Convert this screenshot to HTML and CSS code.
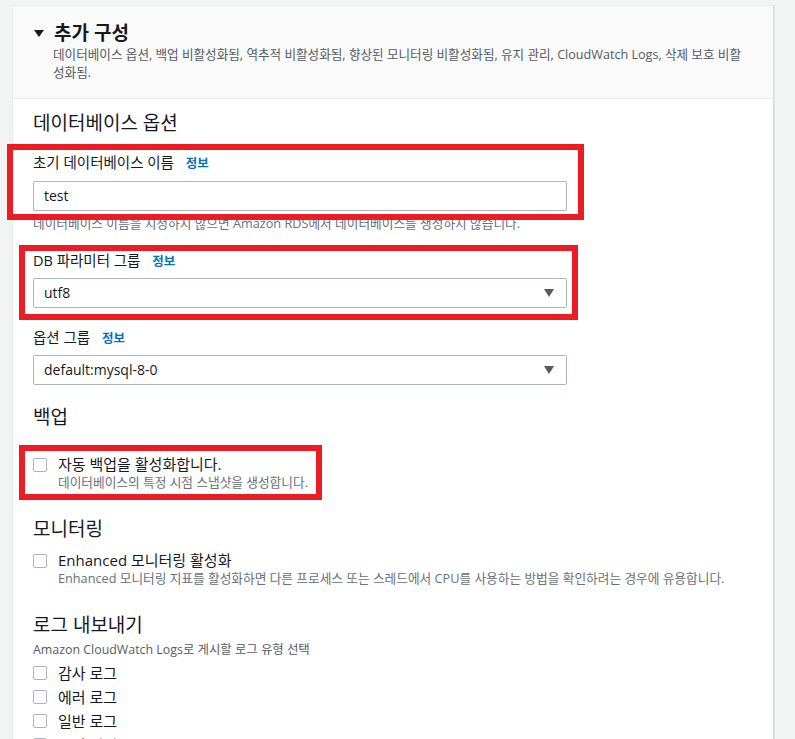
FILE: index.html
```html
<!doctype html>
<html lang="ko">
<head>
	<meta charset="UTF-8">
	<title>추가 구성</title>
	<link rel="stylesheet" href="styles.css">
</head>
<body>
	<div class="page">
		<div class="card">
			<div class="card-header">
				<div class="card-title">
					<svg class="caret" width="10" height="7" viewBox="0 0 10 7"><path d="M0 0H10L5 7Z" fill="#16191f"/></svg>
					<h2>추가 구성</h2>
				</div>
				<p class="card-desc">데이터베이스 옵션, 백업 비활성화됨, 역추적 비활성화됨, 향상된 모니터링 비활성화됨, 유지 관리, CloudWatch Logs, 삭제 보호 비활성화됨.</p>
			</div>
			<div class="card-body">
				<h3 class="section-title">데이터베이스 옵션</h3>

				<div class="field first">
					<div class="label">초기 데이터베이스 이름 <a class="info" href="javascript:void(0);">정보</a></div>
					<div class="control">test</div>
					<div class="hint">데이터베이스 이름을 지정하지 않으면 Amazon RDS에서 데이터베이스를 생성하지 않습니다.</div>
				</div>

				<div class="field">
					<div class="label">DB 파라미터 그룹 <a class="info" href="javascript:void(0);">정보</a></div>
					<div class="control select">utf8
						<svg class="arrow" width="10" height="8" viewBox="0 0 10 8"><path d="M0 0H10L5 8Z" fill="#545b64"/></svg>
					</div>
				</div>

				<div class="field">
					<div class="label">옵션 그룹 <a class="info" href="javascript:void(0);">정보</a></div>
					<div class="control select">default:mysql-8-0
						<svg class="arrow" width="10" height="8" viewBox="0 0 10 8"><path d="M0 0H10L5 8Z" fill="#545b64"/></svg>
					</div>
				</div>

				<h3 class="section-title gap-sm">백업</h3>
				<div class="check first-check">
					<span class="box"></span>
					<div>
						<div class="check-label">자동 백업을 활성화합니다.</div>
						<div class="check-desc">데이터베이스의 특정 시점 스냅샷을 생성합니다.</div>
					</div>
				</div>

				<h3 class="section-title gap-lg">모니터링</h3>
				<div class="check">
					<span class="box"></span>
					<div>
						<div class="check-label">Enhanced 모니터링 활성화</div>
						<div class="check-desc">Enhanced 모니터링 지표를 활성화하면 다른 프로세스 또는 스레드에서 CPU를 사용하는 방법을 확인하려는 경우에 유용합니다.</div>
					</div>
				</div>

				<h3 class="section-title gap-lg">로그 내보내기</h3>
				<div class="section-hint">Amazon CloudWatch Logs로 게시할 로그 유형 선택</div>
				<div class="check-list">
					<div class="check-row"><span class="box"></span><span class="check-label">감사 로그</span></div>
					<div class="check-row"><span class="box"></span><span class="check-label">에러 로그</span></div>
					<div class="check-row"><span class="box"></span><span class="check-label">일반 로그</span></div>
					<div class="check-row"><span class="box"></span><span class="check-label">느린 쿼리 로그</span></div>
				</div>
			</div>
		</div>

		<!-- 강조 표시 -->
		<div class="mark mark-1"></div>
		<div class="mark mark-2"></div>
		<div class="mark mark-3"></div>
	</div>
</body>
</html>
```

FILE: styles.css
```css
html, body {
	margin: 0;
	padding: 0;
	background-color: #f2f3f3;
	font-family: "Open Sans", "Noto Sans CJK KR", sans-serif;
	color: #16191f;
	overflow: hidden;
}
.page {
	position: relative;
	padding-top: 5px;
	height: 734px;
}
.card {
	margin-left: 12px;
	width: 762px;
	box-sizing: border-box;
	background-color: #fff;
	border: 1px solid #eaeded;
	border-right-color: #d5dbdb;
	box-shadow: 1px 0 0 #e4e7e7;
	min-height: 760px;
}
.card-header {
	background-color: #fafafa;
	border-bottom: 1px solid #eaeded;
	padding: 15px 30px 16px 20px;
}
.card-title {
	display: flex;
	align-items: center;
	height: 24px;
}
.caret {
	margin: 1px 10px 0 1px;
}
.card-title h2 {
	margin: 0;
	font-size: 19px;
	line-height: 24px;
	font-weight: 700;
}
.card-desc {
	margin: 1px 0 0 20px;
	font-size: 12.6px;
	line-height: 18px;
	color: #545b64;
}
.card-body {
	padding: 12px 20px 0;
}
.section-title {
	margin: 0;
	font-size: 19px;
	line-height: 24px;
	font-weight: 400;
}
.section-title.gap-sm {
	margin-top: 20px;
}
.section-title.gap-lg {
	margin-top: 27px;
}
.field {
	margin-top: 20px;
}
.field.first {
	margin-top: 18px;
}
.label {
	font-size: 14.5px;
	line-height: 20px;
}
a {
	text-decoration: none;
}
.info {
	margin-left: 8px;
	font-size: 12.5px;
	font-weight: 700;
	color: #0073bb;
}
.control {
	position: relative;
	margin-top: 6px;
	width: 534px;
	height: 30px;
	box-sizing: border-box;
	border: 1px solid #aab7b8;
	border-radius: 2px;
	padding: 0 10px;
	font-size: 14px;
	line-height: 28px;
	background-color: #fff;
}
.field.first .control {
	margin-top: 7px;
}
.select .arrow {
	position: absolute;
	right: 12px;
	top: 10px;
}
.hint {
	margin-top: 4px;
	font-size: 12.7px;
	line-height: 16px;
	color: #687078;
}
.check {
	display: flex;
	margin-top: 9px;
}
.check.first-check {
	margin-top: 25px;
}
.box {
	flex: none;
	width: 14px;
	height: 14px;
	box-sizing: border-box;
	border: 1px solid #aab7b8;
	border-radius: 2px;
	margin: 4px 11px 0 0;
	background-color: #fff;
}
.check-label {
	font-size: 15px;
	line-height: 20px;
}
.check-desc {
	font-size: 12.7px;
	line-height: 16px;
	color: #687078;
}
.section-hint {
	margin-top: 5px;
	font-size: 12.4px;
	line-height: 16px;
	color: #545b64;
}
.check-list {
	margin-top: 3px;
}
.check-row {
	display: flex;
	height: 24px;
	line-height: 24px;
}
.check-row .box {
	margin-top: 5px;
}
.check-row .check-label {
	line-height: 24px;
}
.mark {
	position: absolute;
	border: 6px solid #ec1c24;
	box-sizing: border-box;
}
.mark-1 {
	left: 7px;
	top: 144px;
	width: 577px;
	height: 76px;
}
.mark-2 {
	left: 19px;
	top: 245px;
	width: 559px;
	height: 75px;
}
.mark-3 {
	left: 19px;
	top: 445px;
	width: 303px;
	height: 55px;
}
```
